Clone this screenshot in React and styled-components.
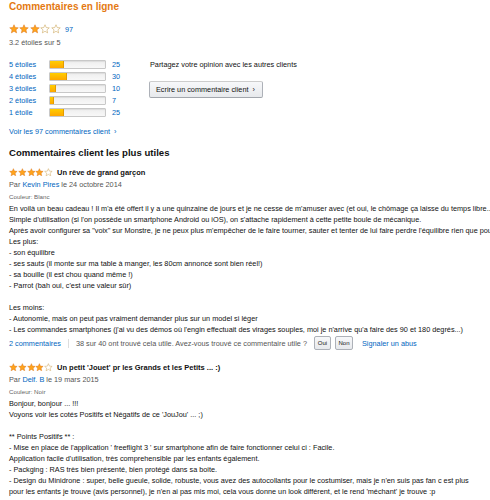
import React from "react";
import styled, { createGlobalStyle } from "styled-components";

const GlobalStyle = createGlobalStyle`
  html, body {
    margin: 0;
    padding: 0;
    background: #fff;
  }
  body {
    font-family: "Liberation Sans", Arial, sans-serif;
    font-size: 7.3px;
    line-height: 11px;
    color: #111;
    overflow-x: hidden;
  }
`;

const Page = styled.div`
  padding: 0 0 0 9px;
  width: 472px;
`;

const Title = styled.h2`
  margin: 1px 0 0;
  font-size: 10px;
  line-height: 12px;
  font-weight: bold;
  color: #e47911;
`;

const Summary = styled.div`
  display: flex;
  margin-top: 10px;
`;

const SummaryLeft = styled.div`
  width: 141px;
`;

const SummaryRight = styled.div`
  padding-top: 36px;
  color: #111;
`;

const StarsRow = styled.div`
  display: flex;
  align-items: center;
  height: 12px;
  gap: ${(p) => p.gap || 0}px;
`;

const Link = styled.a`
  color: #0066c0;
  text-decoration: none;
  cursor: pointer;
`;

const Count = styled(Link)`
  margin-left: 4px;
`;

const Average = styled.div`
  margin-top: 1.5px;
  color: #555;
`;

const Histogram = styled.div`
  margin-top: 10.5px;
`;

const HistRow = styled.div`
  display: grid;
  grid-template-columns: 34px 57px auto;
  column-gap: 6px;
  align-items: center;
  height: 12px;
`;

const Bar = styled.div`
  height: 9px;
  box-sizing: border-box;
  border: 1px solid #c8c8c8;
  border-radius: 1px;
  background: linear-gradient(#eeeeee, #f8f8f8);
  box-shadow: inset 0 1px 1px rgba(0, 0, 0, 0.08);
  overflow: hidden;
`;

const BarFill = styled.div`
  height: 100%;
  background: linear-gradient(#ffce00, #ffa700);
  box-shadow: inset -1px 0 0 #e39b00;
`;

const Button = styled.button`
  display: block;
  box-sizing: border-box;
  margin-top: 11px;
  margin-left: -1px;
  width: 114px;
  height: 17px;
  padding: 0 6px;
  text-align: left;
  font-family: inherit;
  font-size: 7.3px;
  color: #111;
  border: 1px solid #adb1b8;
  border-color: #cdcdcd #adb1b8 #a2a6ac;
  border-radius: 2px;
  background: linear-gradient(#f7f8fa, #e7e9ec);
  cursor: pointer;
`;

const MoreLink = styled(Link)`
  display: block;
  margin-top: 7.5px;
`;

const SectionTitle = styled.h3`
  margin: 10.5px 0 7px;
  font-size: 9.6px;
  line-height: 12px;
  font-weight: bold;
  color: #111;
`;

const Review = styled.div``;

const ReviewTitle = styled.span`
  margin-left: 4px;
  font-weight: bold;
  font-size: 7.5px;
`;

const Byline = styled.div`
  margin-top: 0.5px;
  color: #555;
`;

const Color = styled.div`
  margin-top: 2.5px;
  font-size: 6.2px;
  line-height: 10px;
  color: #666;
`;

const Body = styled.div`
  margin-top: 0.5px;
  color: #111;
  white-space: ${(p) => (p.nowrap ? "nowrap" : "normal")};
`;

const Footer = styled.div`
  display: flex;
  align-items: center;
  height: 14px;
  margin: 1.5px 0 11px;
  color: #555;
`;

const Separator = styled.span`
  width: 1px;
  height: 9px;
  margin: 0 7px;
  background: #ddd;
`;

const SmallButton = styled.button`
  box-sizing: border-box;
  height: 14px;
  width: ${(p) => p.w}px;
  margin-left: ${(p) => p.ml}px;
  padding: 0;
  font-family: inherit;
  font-size: 6px;
  color: #111;
  border: 1px solid #adb1b8;
  border-radius: 2px;
  background: linear-gradient(#f7f8fa, #e7e9ec);
`;

const AbuseLink = styled(Link)`
  margin-left: 9px;
`;

const Star = ({ filled, size }) => (
  <svg width={size} height={size} viewBox="0 0 24 24">
    <polygon
      points="12,1.8 14.9,8.5 22.2,9.2 16.7,14 18.3,21.3 12,17.5 5.7,21.3 7.3,14 1.8,9.2 9.1,8.5"
      fill={filled ? "#ffa41c" : "#fff"}
      stroke={filled ? "#de7921" : "#c9a050"}
      strokeWidth="1.3"
      strokeLinejoin="round"
    />
  </svg>
);

const Stars = ({ count, size }) => (
  <>
    {[0, 1, 2, 3, 4].map((i) => (
      <Star key={i} filled={i < count} size={size} />
    ))}
  </>
);

const histogram = [
  { label: "5 étoiles", value: 25 },
  { label: "4 étoiles", value: 30 },
  { label: "3 étoiles", value: 10 },
  { label: "2 étoiles", value: 7 },
  { label: "1 étoile", value: 25 },
];

const reviews = [
  {
    title: "Un rêve de grand garçon",
    author: "Kevin Pires",
    date: "le 24 octobre 2014",
    color: "Blanc",
    nowrap: true,
    lines: [
      "En voilà un beau cadeau ! Il m'a été offert il y a une quinzaine de jours et je ne cesse de m'amuser avec (et oui, le chômage ça laisse du temps libre...)",
      "Simple d'utilisation (si l'on possède un smartphone Android ou iOS), on s'attache rapidement à cette petite boule de mécanique.",
      "Après avoir configurer sa \"voix\" sur Monstre, je ne peux plus m'empêcher de le faire tourner, sauter et tenter de lui faire perdre l'équilibre rien que pour voir.",
      "Les plus:",
      "- son équilibre",
      "- ses sauts (il monte sur ma table à manger, les 80cm annoncé sont bien réel!)",
      "- sa bouille (il est chou quand même !)",
      "- Parrot (bah oui, c'est une valeur sûr)",
      "",
      "Les moins:",
      "- Autonomie, mais on peut pas vraiment demander plus sur un model si léger",
      "- Les commandes smartphones (j'ai vu des démos où l'engin effectuait des virages souples, moi je n'arrive qu'a faire des 90 et 180 degrés...)",
    ],
    footer: true,
  },
  {
    title: "Un petit 'Jouet' pr les Grands et les Petits ... :)",
    author: "Delf. B",
    date: "le 19 mars 2015",
    color: "Noir",
    lines: [
      "Bonjour, bonjour ... !!!",
      "Voyons voir les cotés Positifs et Négatifs de ce 'JouJou' ... ;)",
      "",
      "** Points Positifs ** :",
      "- Mise en place de l'application ' freeflight 3 ' sur smartphone afin de faire fonctionner celui ci : Facile.",
      "Application facile d'utilisation, très comprehensible par les enfants également.",
      "- Packging : RAS très bien présenté, bien protégé dans sa boite.",
      "- Design du Minidrone : super, belle gueule, solide, robuste, vous avez des autocollants pour le costumiser, mais je n'en suis pas fan c est plus pour les enfants je trouve (avis personnel), je n'en ai pas mis moi, cela vous donne un look différent, et le rend 'méchant' je trouve :p",
      "- Image retranmise sur smartphone : fluide, vraiment nickel, c est meme hallucinant.",
    ],
  },
];

const App = () => (
  <>
    <GlobalStyle />
    <Page>
      <Title>Commentaires en ligne</Title>
      <Summary>
        <SummaryLeft>
          <StarsRow gap={0.4}>
            <Stars count={3} size={10} />
            <Count>97</Count>
          </StarsRow>
          <Average>3.2 étoiles sur 5</Average>
          <Histogram>
            {histogram.map((row) => (
              <HistRow key={row.label}>
                <Link>{row.label}</Link>
                <Bar>
                  <BarFill style={{ width: `${(row.value / 97) * 100}%` }} />
                </Bar>
                <Link>{row.value}</Link>
              </HistRow>
            ))}
          </Histogram>
        </SummaryLeft>
        <SummaryRight>
          <div>Partagez votre opinion avec les autres clients</div>
          <Button>Ecrire un commentaire client &nbsp;›</Button>
        </SummaryRight>
      </Summary>
      <MoreLink>Voir les 97 commentaires client &nbsp;›</MoreLink>
      <SectionTitle>Commentaires client les plus utiles</SectionTitle>
      {reviews.map((r) => (
        <Review key={r.title}>
          <StarsRow>
            <Stars count={4} size={8.8} />
            <ReviewTitle>{r.title}</ReviewTitle>
          </StarsRow>
          <Byline>
            Par <Link>{r.author}</Link> {r.date}
          </Byline>
          <Color>Couleur: {r.color}</Color>
          <Body nowrap={r.nowrap}>
            {r.lines.map((l, i) => (
              <div key={i}>{l || "\u00a0"}</div>
            ))}
          </Body>
          {r.footer && (
            <Footer>
              <Link>2 commentaires</Link>
              <Separator />
              <span>38 sur 40 ont trouvé cela utile. Avez-vous trouvé ce commentaire utile ?</span>
              <SmallButton w={17} ml={7}>Oui</SmallButton>
              <SmallButton w={18} ml={4}>Non</SmallButton>
              <AbuseLink>Signaler un abus</AbuseLink>
            </Footer>
          )}
        </Review>
      ))}
    </Page>
  </>
);

export default App;
